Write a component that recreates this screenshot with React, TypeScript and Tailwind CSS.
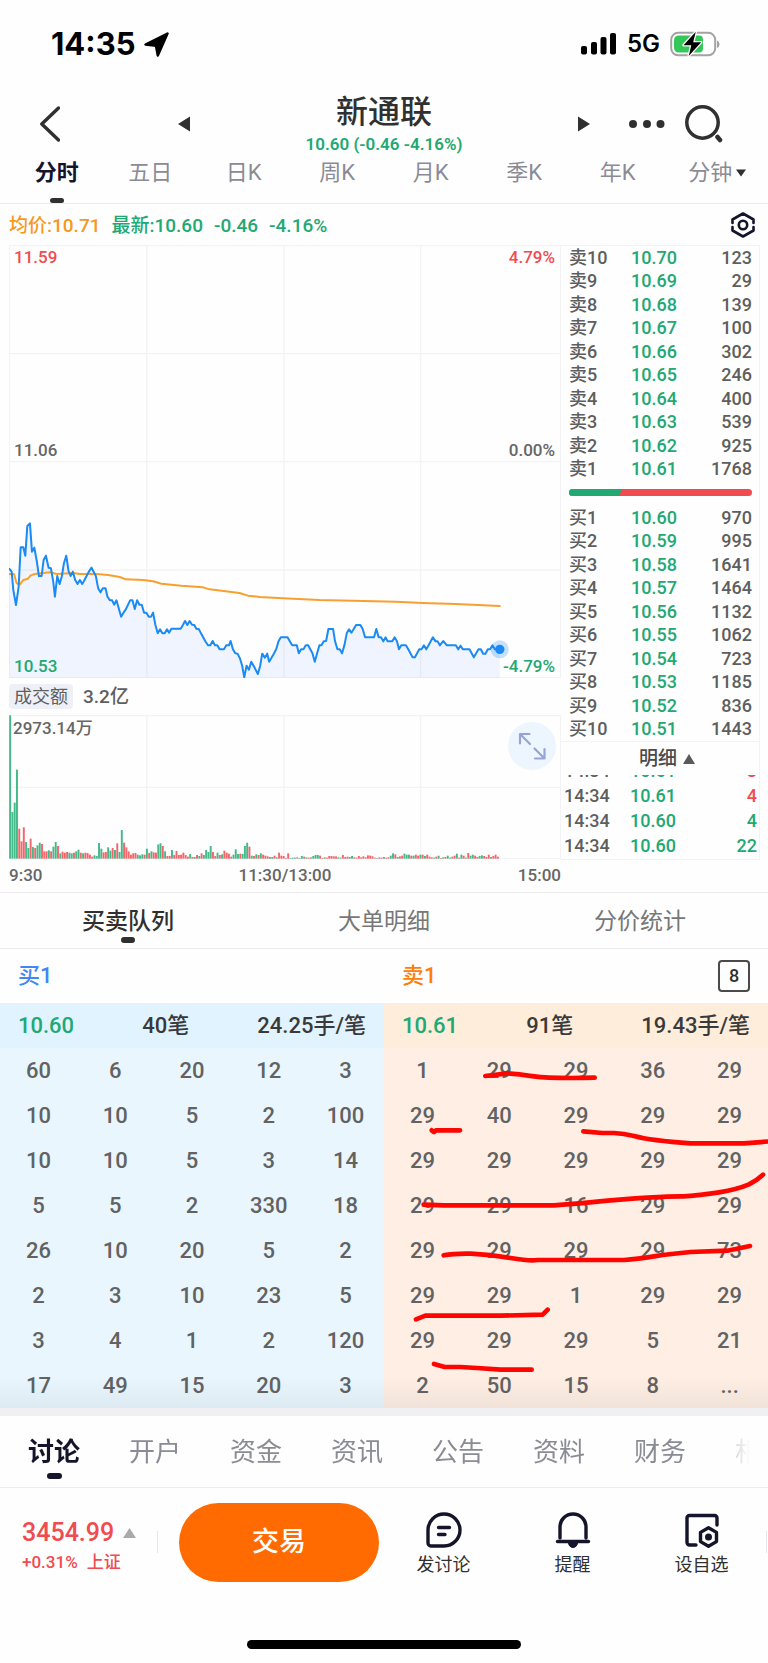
import React from "react";

type Level = [string, string, string];

const asks: Level[] = [
  ["卖10", "10.70", "123"],
  ["卖9", "10.69", "29"],
  ["卖8", "10.68", "139"],
  ["卖7", "10.67", "100"],
  ["卖6", "10.66", "302"],
  ["卖5", "10.65", "246"],
  ["卖4", "10.64", "400"],
  ["卖3", "10.63", "539"],
  ["卖2", "10.62", "925"],
  ["卖1", "10.61", "1768"],
];

const bids: Level[] = [
  ["买1", "10.60", "970"],
  ["买2", "10.59", "995"],
  ["买3", "10.58", "1641"],
  ["买4", "10.57", "1464"],
  ["买5", "10.56", "1132"],
  ["买6", "10.55", "1062"],
  ["买7", "10.54", "723"],
  ["买8", "10.53", "1185"],
  ["买9", "10.52", "836"],
  ["买10", "10.51", "1443"],
];

const trades = [
  { time: "14:34", price: "10.61", qty: "3", up: true },
  { time: "14:34", price: "10.61", qty: "4", up: true },
  { time: "14:34", price: "10.60", qty: "4", up: false },
  { time: "14:34", price: "10.60", qty: "22", up: false },
];

const buyQueue = [
  ["60", "6", "20", "12", "3"],
  ["10", "10", "5", "2", "100"],
  ["10", "10", "5", "3", "14"],
  ["5", "5", "2", "330", "18"],
  ["26", "10", "20", "5", "2"],
  ["2", "3", "10", "23", "5"],
  ["3", "4", "1", "2", "120"],
  ["17", "49", "15", "20", "3"],
];

const sellQueue = [
  ["1", "29", "29", "36", "29"],
  ["29", "40", "29", "29", "29"],
  ["29", "29", "29", "29", "29"],
  ["29", "29", "16", "29", "29"],
  ["29", "29", "29", "29", "73"],
  ["29", "29", "1", "29", "29"],
  ["29", "29", "29", "5", "21"],
  ["2", "50", "15", "8", "..."],
];

const priceLine =
  "27,205 35,215 40,270 48,315 56,260 62,142 70,142 76,167 82,78 90,70 96,155 103,143 110,180 117,228 125,228 131,180 138,167 146,203 153,205 160,245 165,290 172,228 179,252 186,228 192,190 199,167 206,213 212,228 219,215 226,240 233,252 240,240 247,252 254,240 268,213 275,203 288,228 295,265 302,277 309,265 317,265 323,290 330,301 337,301 343,314 350,301 364,350 371,338 378,328 391,301 398,301 405,327 412,301 419,314 426,314 433,338 440,338 447,350 454,350 460,338 467,375 474,400 481,388 488,400 495,400 502,388 508,398 515,386 543,386 550,374 556,363 563,375 570,363 577,374 584,375 590,386 598,388 604,400 618,425 625,436 632,436 639,423 646,436 653,436 660,448 673,448 680,436 688,436 693,423 700,448 707,460 714,461 721,475 728,498 734,532 741,497 748,509 755,485 762,497 775,522 782,497 788,461 796,473 803,461 809,485 823,461 830,448 837,424 844,412 864,412 871,424 878,436 892,436 898,460 905,448 912,448 919,436 926,436 939,460 946,485 953,460 960,436 966,436 973,424 980,423 987,387 1001,387 1007,424 1014,448 1021,448 1028,460 1035,436 1042,400 1049,388 1056,398 1063,387 1070,375 1083,375 1090,387 1097,412 1124,412 1131,387 1138,412 1145,412 1152,424 1159,412 1165,424 1179,424 1186,412 1193,424 1199,448 1206,436 1220,436 1227,448 1240,472 1247,472 1260,448 1267,448 1274,436 1281,448 1288,436 1301,412 1309,424 1315,424 1322,436 1332,423 1343,436 1370,436 1377,448 1384,437 1391,448 1411,448 1424,472 1438,448 1445,448 1452,461 1459,461 1466,448 1473,448 1480,436 1487,448 1502,448";

const averageLine =
  "27,222 42,222 50,250 60,253 70,240 84,236 92,226 105,222 150,217 170,222 220,219 240,222 290,222 325,225 360,231 378,238 430,240 460,244 485,251 545,257 610,262 630,268 720,279 745,287 780,291 850,295 960,300 1190,305 1270,309 1370,312 1502,318";

const volumes = (
  "g430 g140 g168 g267 r90 r52 r94 g50 g32 r60 g35 r32 g40 g48 r44 r22 r22 g25 r22 g36 g50 r38 g16 r21 r18 r20 g18 g16 r18 g22 g27 r18 g16 r18 r17 r12 r6 g10 g8 g47 g30 r19 r20 g34 g24 r32 g26 r46 g20 g86 r48 r34 r22 r12 r16 r17 g12 g10 g13 r12 g30 r17 g22 r19 r18 g43 g46 r38 g22 r8 r8 g26 r11 r23 r11 r12 r18 r11 r6 g14 r5 g5 r11 g8 r16 g11 g26 g20 g38 r20 r8 g18 r11 g13 r24 r18 r15 r6 g12 g28 g14 r15 g14 g38 g48 r36 g9 r8 g13 r11 g16 r12 r9 r7 g5 g5 r9 g4 r18 r9 " +
  "r8 r2 r16 g2 g3 g3 r4 g2 g8 r6 g4 r3 r4 g8 g11 g11 r9 r2 g4 r3 r8 r8 r7 r7 g4 g3 r11 r5 r6 g5 g8 r4 r3 r8 r4 r7 r4 r10 r9 r7 r3 g2 r4 r3 g5 r3 r4 g9 g16 r13 g5 r7 r9 g15 g12 g12 r9 g9 r12 r9 g12 r12 g8 r12 r6 r4 g3 r6 g9 r2 g4 r5 g9 g3 r6 r9 g15 r3 g12 r9 g3 r17 g9 g12 r9 r5 g8 g10 r8 r5 r12 g5 r8 r12 r6"
)
  .split(" ")
  .slice(0, 216)
  .map((v) => ({ rising: v[0] === "r", height: Number(v.slice(1)) }));

function StatusBar() {
  return (
    <div className="flex h-[88px] items-center justify-between pr-12 pl-[51px] font-['Inter','Noto_Sans_CJK_SC',sans-serif] text-black">
      <div className="flex items-center gap-2">
        <span className="text-[31px] leading-8 font-bold">14:35</span>
        <svg className="h-[25px] w-[25px]" viewBox="0 0 25 25" aria-hidden="true">
          <path d="M23.5 1.5 13.8 23.5 12 13.8 1.5 12.5Z" fill="#000" stroke="#000" strokeWidth="2.500" strokeLinejoin="round" />
        </svg>
      </div>
      <div className="flex items-center gap-[10px]">
        <svg className="h-6 w-9" viewBox="0 0 36 24" aria-hidden="true">
          <rect x="0" y="14" width="6" height="8.5" rx="2" />
          <rect x="10" y="10" width="6" height="12.5" rx="2" />
          <rect x="19.500" y="5" width="6" height="17.500" rx="2" />
          <rect x="29" y="1" width="6" height="21.500" rx="2" />
        </svg>
        <span className="text-2xl leading-8 font-semibold">5G</span>
        <svg className="h-7 w-[50px]" viewBox="0 0 50 28" aria-hidden="true">
          <rect x="1.200" y="2.800" width="44" height="22.500" rx="7" fill="#fff" stroke="#a3a3a3" strokeWidth="2" />
          <path d="M8.500 5.500H29a4 4 0 0 1 4 4v9a4 4 0 0 1-4 4H8.500a4.500 4.500 0 0 1-4.500-4.500v-8a4.500 4.500 0 0 1 4.500-4.500Z" fill="#34c759" />
          <path d="M47 10.500q2.500 1 2.500 3.700T47 18Z" fill="#a3a3a3" />
          <path d="M25.800 1.800 13.500 15.200h7.800l-2.600 10.800L31.200 12.200h-8Z" fill="#000" stroke="#fff" strokeWidth="2.500" paintOrder="stroke" strokeLinejoin="round" />
        </svg>
      </div>
    </div>
  );
}

function Header() {
  return (
    <header className="grid h-[75px] grid-cols-[190px_1fr_190px] items-center pb-1 text-[#303030]">
      <div className="flex items-center justify-between pl-10">
        <button aria-label="返回">
          <svg className="h-9 w-5" viewBox="0 0 20 36" fill="none" stroke="currentColor" strokeWidth="3.400" strokeLinecap="round" strokeLinejoin="round">
            <path d="M18.500 2 1.800 18l16.700 16" />
          </svg>
        </button>
        <button aria-label="上一只">
          <svg className="h-4 w-3" viewBox="0 0 12 16" fill="currentColor">
            <path d="M12 .5v15L0 8Z" />
          </svg>
        </button>
      </div>
      <div className="flex flex-col items-center gap-1">
        <h1 className="text-[32px] leading-9 font-medium">新通联</h1>
        <p className="text-[17px] leading-5 font-semibold text-[#22a873]">10.60 (-0.46 -4.16%)</p>
      </div>
      <div className="flex items-center justify-between pr-[45px]">
        <button aria-label="下一只">
          <svg className="h-4 w-3" viewBox="0 0 12 16" fill="currentColor">
            <path d="M0 .5v15L12 8Z" />
          </svg>
        </button>
        <div className="flex items-center gap-5">
          <button aria-label="更多">
            <svg className="h-2 w-9" viewBox="0 0 36 8" fill="currentColor">
              <circle cx="4" cy="4" r="4" />
              <circle cx="18" cy="4" r="4" />
              <circle cx="31.500" cy="4" r="4" />
            </svg>
          </button>
          <button aria-label="搜索">
            <svg className="h-[38px] w-[38px]" viewBox="0 0 38 38" fill="none" stroke="currentColor" strokeLinecap="round">
              <circle cx="17.500" cy="17.500" r="15.700" strokeWidth="3.500" />
              <path d="m32.500 32 2.500 3" strokeWidth="4.500" />
            </svg>
          </button>
        </div>
      </div>
    </header>
  );
}

function PeriodTabs() {
  const periods = ["五日", "日K", "周K", "月K", "季K", "年K"];
  return (
    <nav className="grid h-[41px] grid-cols-8 items-start border-b border-[#ececee] px-[10px] text-[22px] leading-5 text-[#8b8b96]">
      <button className="flex flex-col items-center gap-[15px] font-semibold text-[#14142b]">
        分时
        <span className="h-[5px] w-[14px] rounded-full bg-[#303030]" />
      </button>
      {periods.map((p) => (
        <button key={p}>{p}</button>
      ))}
      <button className="flex items-center justify-center gap-1 pl-3 whitespace-nowrap">
        分钟
        <svg className="h-2 w-[10px] shrink-0" viewBox="0 0 10 8" fill="#303030">
          <path d="M0 .5h10L5 7.500Z" />
        </svg>
      </button>
    </nav>
  );
}

function QuoteRow() {
  return (
    <div className="flex h-[41px] items-center justify-between pr-[13px] pl-[9px]">
      <p className="flex gap-[11px] pt-[2px] text-[19px] leading-6 font-medium text-[#22a873]">
        <span className="text-[#f7981d]">均价:10.71</span>
        <span>最新:10.60</span>
        <span>-0.46</span>
        <span>-4.16%</span>
      </p>
      <button aria-label="图表设置">
        <svg className="h-[26px] w-6" viewBox="0 0 24 26" fill="none" stroke="#14142b" strokeWidth="2.600" strokeLinejoin="round" strokeLinecap="round">
          <path d="M1.500 11V7.500L12 1.500l10.500 6V11M1.500 15v3.500L12 24.500l10.500-6V15" />
          <circle cx="12" cy="13" r="4.200" />
        </svg>
      </button>
    </div>
  );
}

function PriceChart() {
  return (
    <div className="relative h-[433px] border-r border-[#f3f3f5] text-[17px] leading-6 font-medium text-[#666]">
      <svg className="block h-full w-full" viewBox="27 -765 1656 1299" preserveAspectRatio="none" role="img" aria-label="分时走势">
        <g fill="none" stroke="#f3f3f5" strokeWidth="4">
          <path d="M27-763H1683M27-439H1683M27-115H1683M27 210H1683M27 533H1683" />
          <path d="M28-765V534M441-765V534M853-765V534M1264-765V534" />
        </g>
        <polygon points={`27,534 ${priceLine} 1502,534`} fill="#3b7cff" fillOpacity="0.080" />
        <polyline points={averageLine} fill="none" stroke="#f8a02e" strokeWidth="6" strokeLinejoin="round" strokeLinecap="round" />
        <polyline points={priceLine} fill="none" stroke="#1a8af5" strokeWidth="6" strokeLinejoin="round" />
        <circle cx="1502" cy="448" r="27" fill="#1a8af5" fillOpacity="0.250" />
        <circle cx="1502" cy="448" r="14" fill="#1a8af5" />
      </svg>
      <div className="absolute inset-0 flex flex-col justify-between pr-[5px] pl-[5px]">
        <div className="flex justify-between text-[#f04b50]">
          <span>11.59</span>
          <span>4.79%</span>
        </div>
        <div className="flex justify-between pb-6">
          <span>11.06</span>
          <span>0.00%</span>
        </div>
        <div className="flex justify-between text-[#22a873]">
          <span>10.53</span>
          <span>-4.79%</span>
        </div>
      </div>
    </div>
  );
}

function VolumeChart() {
  return (
    <div className="relative h-36 border-r border-[#f3f3f5]">
      <svg className="block h-full w-full" viewBox="27 104 1656 432" preserveAspectRatio="none" role="img" aria-label="成交额">
        <path d="M27 106H1683M27 321H1683M27 535H1683M28 104V536M441 104V536M853 104V536M1264 104V536" fill="none" stroke="#f3f3f5" strokeWidth="4" />
        {volumes.map((v, i) => (
          <rect key={i} x={27.500 + i * 6.850} y={535 - v.height} width="5.800" height={v.height} fill={v.rising ? "#f5666b" : "#45b98a"} />
        ))}
      </svg>
      <div className="absolute inset-0 flex items-start justify-between pt-px pr-1 pl-1">
        <span className="text-[17px] leading-6 font-medium text-[#666]">2973.14万</span>
        <button aria-label="全屏" className="mt-[6px] flex size-12 items-center justify-center rounded-full bg-[#edf6fe]">
          <svg className="size-7" viewBox="0 0 28 28" fill="none" stroke="#98a3d6" strokeWidth="2.200" strokeLinecap="round" strokeLinejoin="round">
            <path d="M11.500 2H2v9.500M2.500 2.500l9.500 9.500M26.500 17v9.500H17M26 26l-9.500-9.500" />
          </svg>
        </button>
      </div>
    </div>
  );
}

function LevelTable({ rows, label }: { rows: Level[]; label: string }) {
  return (
    <table aria-label={label} className="h-[235px] w-full table-fixed text-lg leading-5 font-medium text-[#5e5e5e]">
      <colgroup>
        <col className="w-[62px]" />
        <col />
        <col />
      </colgroup>
      <tbody>
        {rows.map(([name, price, qty]) => (
          <tr key={name}>
            <td className="p-0 whitespace-nowrap">{name}</td>
            <td className="p-0 text-[#22a873]">{price}</td>
            <td className="p-0 text-right">{qty}</td>
          </tr>
        ))}
      </tbody>
    </table>
  );
}

function OrderBook() {
  return (
    <aside className="flex h-[615px] flex-col border border-l-0 border-[#f3f3f5]">
      <div className="pr-[7px] pl-2">
        <LevelTable rows={asks} label="卖盘" />
        <svg className="mt-2 mb-[10px] block h-[7px] w-full" viewBox="0 0 183 7" preserveAspectRatio="none" aria-hidden="true">
          <rect width="183" height="7" rx="3.500" fill="#f04b50" />
          <path d="M3.500 0H53L50 7H3.500a3.500 3.500 0 0 1 0-7Z" fill="#22a873" />
        </svg>
        <LevelTable rows={bids} label="买盘" />
      </div>
      <button className="flex h-[34px] items-center justify-center gap-[6px] border-t border-[#f3f3f5] pl-[14px] text-[19px] leading-6 font-medium text-[#4a4a4a]">
        明细
        <svg className="h-[10px] w-3" viewBox="0 0 12 10" fill="#5a5a5a">
          <path d="M6 0 12 10H0Z" />
        </svg>
      </button>
      <div className="flex min-h-0 flex-1 flex-col justify-end overflow-hidden pr-[2px] pb-px pl-[3px]">
        <table aria-label="明细" className="w-full shrink-0 table-fixed text-lg leading-[25px] font-medium text-[#5e5e5e]">
          <colgroup>
            <col className="w-[66px]" />
            <col />
            <col />
          </colgroup>
          <tbody>
            {trades.map((t, i) => (
              <tr key={i}>
                <td className="p-0">{t.time}</td>
                <td className="p-0 text-[#22a873]">{t.price}</td>
                <td className={t.up ? "p-0 text-right text-[#f04b50]" : "p-0 text-right text-[#22a873]"}>{t.qty}</td>
              </tr>
            ))}
          </tbody>
        </table>
      </div>
    </aside>
  );
}

function MarketPanel() {
  return (
    <section className="border-b border-[#ececee] pb-1 pl-[9px]">
      <div className="grid grid-cols-[1fr_199px] pr-2">
        <div>
          <PriceChart />
          <div className="flex h-[37px] items-center gap-[10px] text-[#5e5e5e]">
            <button className="rounded-[4px] bg-[#eef0f8] px-[5px] text-lg leading-[25px]">成交额</button>
            <span className="text-[19px] leading-6 font-medium">3.2亿</span>
          </div>
          <VolumeChart />
        </div>
        <OrderBook />
      </div>
      <div className="grid h-7 grid-cols-[1fr_auto_1fr_199px] items-center pt-px pr-2 text-[17px] leading-6 font-medium text-[#666]">
        <span>9:30</span>
        <span>11:30/13:00</span>
        <span className="text-right">15:00</span>
      </div>
    </section>
  );
}

function QueueTabs() {
  return (
    <nav className="grid h-14 grid-cols-3 items-start border-b border-[#ececee] pt-4 text-[23px] leading-[26px] text-[#777]">
      <button className="flex flex-col items-center gap-[2px] font-medium text-[#303030]">
        买卖队列
        <span className="h-[6px] w-[14px] rounded-full bg-[#303030]" />
      </button>
      <button>大单明细</button>
      <button>分价统计</button>
    </nav>
  );
}

function QueueGrid({ rows, label }: { rows: string[][]; label: string }) {
  return (
    <table aria-label={label} className="w-full table-fixed text-center text-[22px] leading-7 font-medium text-[#626262]">
      <tbody>
        {rows.map((row, r) => (
          <tr key={r} className="h-[45px]">
            {row.map((cell, c) => (
              <td key={c} className="p-0">
                {cell}
              </td>
            ))}
          </tr>
        ))}
      </tbody>
    </table>
  );
}

function Queues() {
  return (
    <section>
      <div className="grid h-[54px] grid-cols-2 items-center text-[22px] leading-7 font-medium">
        <h2 className="pl-[18px] text-[#4285f4]">买1</h2>
        <div className="flex items-center justify-between pr-[18px] pl-[18px]">
          <h2 className="text-[#ff7d0a]">卖1</h2>
          <button className="flex size-8 items-center justify-center rounded-[4px] border-2 border-[#4a4a4a] text-lg leading-5 text-[#303030]">8</button>
        </div>
      </div>
      <div className="grid grid-cols-2">
        <div className="bg-[#e9f6fe]">
          <div className="flex h-[45px] items-center justify-between bg-[#e1f3ff] px-[18px] text-[22px] leading-7 font-medium text-[#3a3a3a]">
            <span className="text-[#22a873]">10.60</span>
            <span>40笔</span>
            <span>24.25手/笔</span>
          </div>
          <QueueGrid rows={buyQueue} label="买1队列" />
        </div>
        <div className="bg-[#feeee4]">
          <div className="flex h-[45px] items-center justify-between bg-[#feedda] px-[18px] text-[22px] leading-7 font-medium text-[#3a3a3a]">
            <span className="text-[#22a873]">10.61</span>
            <span>91笔</span>
            <span>19.43手/笔</span>
          </div>
          <div className="relative">
            <QueueGrid rows={sellQueue} label="卖1队列" />
            <svg className="pointer-events-none absolute inset-0 h-full w-full" viewBox="0 24 1152 1080" preserveAspectRatio="none" fill="none" stroke="#ff0500" strokeWidth="14" strokeLinecap="round" strokeLinejoin="round" aria-hidden="true">
              <path d="M304 108 370 100Q400 102 450 109T632 113" />
              <path d="M143 271 150 276 156 271H228" />
              <path d="M598 274 655 279H690Q720 281 750 288 800 302 920 310H1080L1158 304" />
              <path d="M119 494 180 496H510Q560 493 640 485T790 473 890 469 1005 457Q1060 448 1095 433 1120 420 1137 404" />
              <path d="M179 646Q210 640 260 641 320 644 380 654T460 660H720Q760 657 810 649T920 636L1030 632 1098 618" />
              <path d="M96 838 124 827H350L476 824 491 809" />
              <path d="M150 972 182 981H230Q290 984 350 989H443" />
            </svg>
          </div>
        </div>
      </div>
      <div className="relative h-2 bg-[#f0f0f2]">
        <div className="absolute inset-x-0 bottom-full h-8 bg-linear-to-t from-black/5 to-transparent" />
      </div>
    </section>
  );
}

function SectionTabs() {
  const tabs = ["开户", "资金", "资讯", "公告", "资料", "财务", "相关"];
  return (
    <nav className="h-[72px] border-b border-[#ededf3] pr-[18px]">
      <div className="flex items-start gap-[49px] overflow-hidden mask-r-from-94% mask-r-to-100% pt-5 pl-[28px] text-[26px] leading-8 text-[#8b8b96]">
        <button className="flex shrink-0 flex-col items-center gap-[5px] font-semibold text-[#14142b]">
          讨论
          <span className="h-[6px] w-[15px] rounded-full bg-[#14142b]" />
        </button>
        {tabs.map((t) => (
          <button key={t} className="shrink-0">
            {t}
          </button>
        ))}
      </div>
    </nav>
  );
}

function BottomBar() {
  return (
    <div className="flex h-[106px] items-center pt-[2px]">
      <a href="#index" className="flex w-[157px] flex-col gap-1 pt-2 pl-[22px] text-[#f04b50]">
        <span className="flex items-center gap-[9px] text-[25px] leading-7 font-medium">
          3454.99
          <svg className="h-[10px] w-[13px]" viewBox="0 0 13 10" fill="#aaa">
            <path d="M6.500 0 13 10H0Z" />
          </svg>
        </span>
        <span className="flex gap-[9px] text-[17px] leading-[22px] font-medium">
          <span>+0.31%</span>
          <span>上证</span>
        </span>
      </a>
      <span className="h-[22px] w-px bg-[#e6e6ec]" />
      <button className="ml-[21px] h-[79px] w-[200px] rounded-full bg-[#ff6b00] text-[27px] leading-8 font-medium text-white">交易</button>
      <div className="grid flex-1 grid-cols-3 pt-1 text-lg leading-6 text-[#303030]">
        <button className="flex flex-col items-center gap-[5px]">
          <svg className="size-9" viewBox="0 0 36 36" fill="none" stroke="#14142b" strokeWidth="3.400" strokeLinecap="round" strokeLinejoin="round">
            <path d="M18 2a16 16 0 1 1 0 32H5a3 3 0 0 1-3-3V18A16 16 0 0 1 18 2Z" />
            <path d="M12.500 15.500h11M12.500 22.500h6.500" />
          </svg>
          发讨论
        </button>
        <button className="flex flex-col items-center gap-[5px]">
          <svg className="size-9" viewBox="0 0 36 36" fill="none" stroke="#14142b" strokeWidth="3.400" strokeLinecap="round" strokeLinejoin="round">
            <path d="M5 26V15a13 13 0 0 1 26 0v11" />
            <path d="M2.500 29.500h31" />
            <path d="M13.500 31a4.500 4.500 0 0 0 9 0Z" fill="#14142b" strokeWidth="1" />
          </svg>
          提醒
        </button>
        <button className="flex flex-col items-center gap-[5px]">
          <svg className="size-9" viewBox="0 0 36 36" fill="none" stroke="#14142b" strokeWidth="3.400" strokeLinecap="round" strokeLinejoin="round">
            <path d="M33 13V6a2.500 2.500 0 0 0-2.500-2.500h-25A2.500 2.500 0 0 0 3 6v24.500A2.500 2.500 0 0 0 5.500 33H12" />
            <path d="m24.500 15.800 8 4.600v9.200l-8 4.600-8-4.600v-9.200Z" />
            <circle cx="24.500" cy="25" r="1.800" fill="#14142b" />
          </svg>
          设自选
        </button>
      </div>
      <span className="mr-px h-[22px] w-px bg-[#e6e6ec]" />
    </div>
  );
}

export default function App() {
  return (
    <main className="min-h-screen w-full bg-[#fefefe] font-['Roboto','Noto_Sans_CJK_SC',sans-serif]">
      <StatusBar />
      <Header />
      <PeriodTabs />
      <QuoteRow />
      <MarketPanel />
      <QueueTabs />
      <Queues />
      <SectionTabs />
      <BottomBar />
      <div className="flex justify-center pt-[46px] pb-3">
        <div className="h-[9px] w-[274px] rounded-full bg-black" />
      </div>
    </main>
  );
}
